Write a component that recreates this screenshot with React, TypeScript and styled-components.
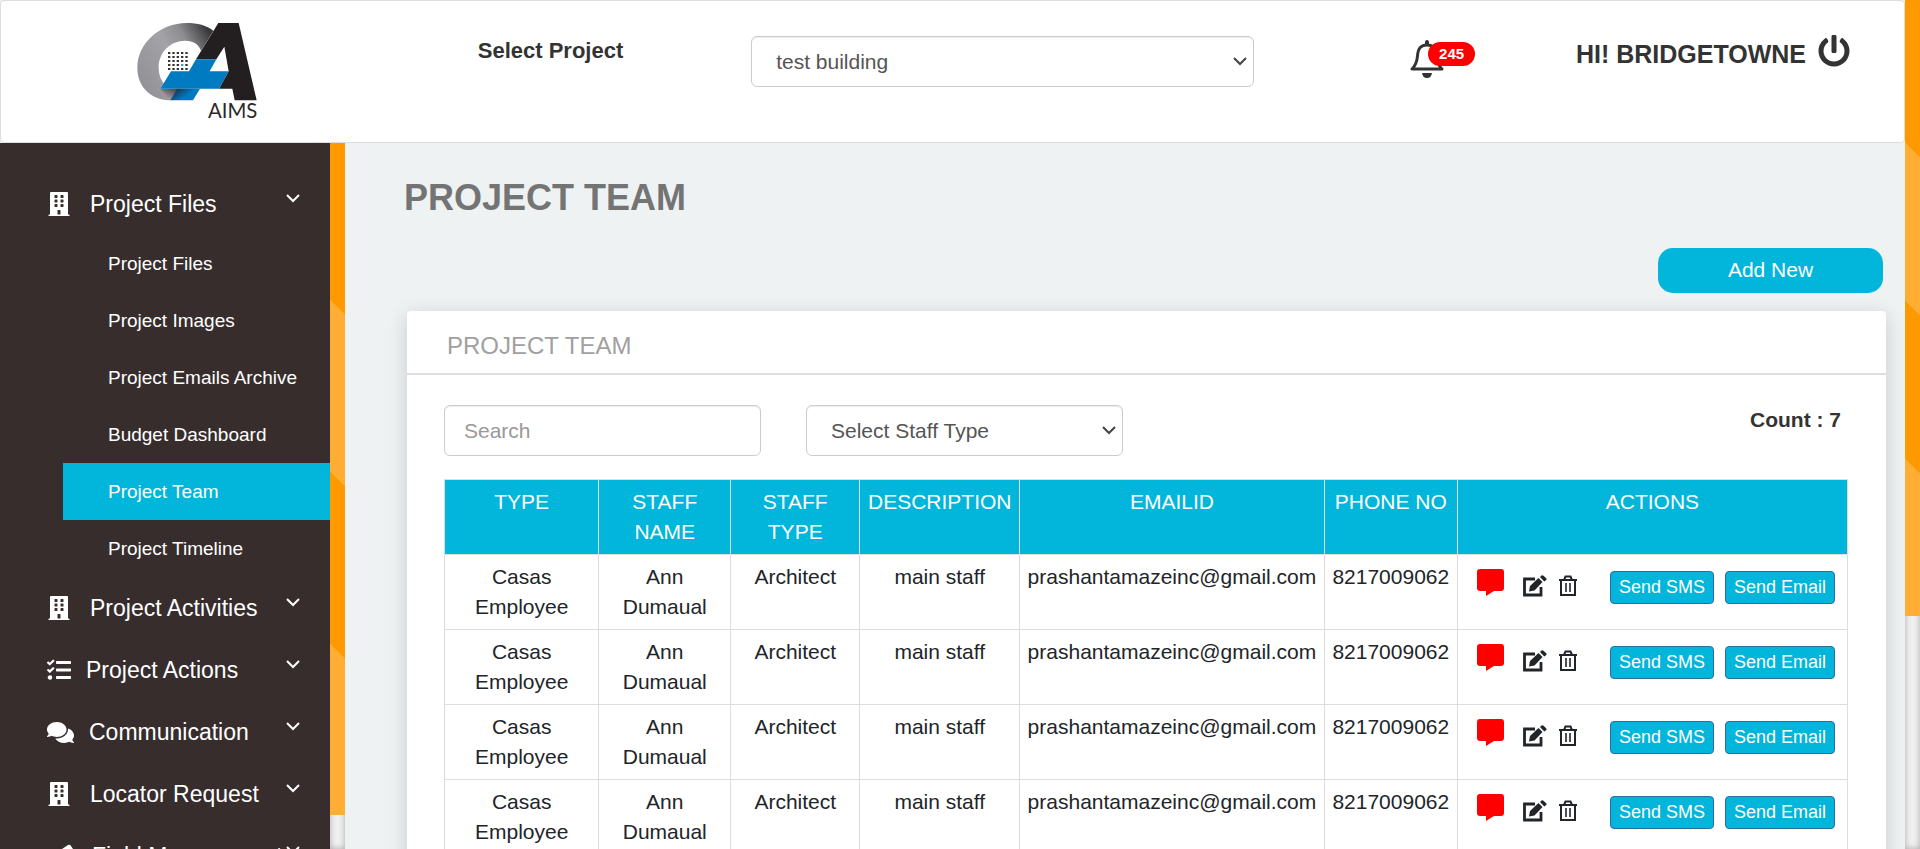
import React from 'react';
import styled, { createGlobalStyle } from 'styled-components';
import { FaBuilding, FaComments, FaPowerOff, FaTasks } from 'react-icons/fa';

const GlobalStyle = createGlobalStyle`
  *, *::before, *::after { box-sizing: border-box; }
  body { margin: 0; font-family: "Liberation Sans", Arial, sans-serif; color: #333; background: #eef2f3; }
  button, input, select { font-family: inherit; }
`;

const Shell = styled.div`
  display: grid;
  grid-template-columns: minmax(0, 1fr) 15px;
  height: 100vh;
  overflow: hidden;
`;

const Page = styled.div`
  display: flex;
  flex-direction: column;
  min-height: 0;
`;

const ScrollRail = styled.div`
  background: #f0f0f0;
  box-shadow: inset 0 0 6px rgba(0, 0, 0, 0.3);
`;

const ScrollThumb = styled.div<{ $share: string }>`
  height: ${(p) => p.$share};
  background: #ff9900 linear-gradient(45deg, #ffad33 25%, transparent 25%, transparent 50%, #ffad33 50%, #ffad33 75%, transparent 75%);
`;

const Header = styled.header`
  flex: none;
  display: grid;
  grid-template-columns: 25% 14% 30% 14% minmax(0, 1fr);
  height: 143px;
  background: #fff;
  border: 1px solid #ddd;
  border-radius: 4px;
`;

const LogoLink = styled.a`
  padding: 20px 0 0 133px;
  svg { display: block; }
`;

const ProjectLabel = styled.label`
  padding: 36px 0 0 1px;
  font-size: 22px;
  line-height: 28px;
  font-weight: bold;
`;

const ProjectField = styled.div`
  padding: 35px 60px 0 8px;
`;

const SelectWrap = styled.div`
  position: relative;
  svg { position: absolute; right: 7px; top: 18px; pointer-events: none; }
`;

const Select = styled.select`
  appearance: none;
  display: block;
  width: 100%;
  height: 51px;
  padding: 0 24px;
  font-size: 21px;
  color: #555;
  background: #fff;
  border: 1px solid #ccc;
  border-radius: 6px;
  box-shadow: inset 0 1px 1px rgba(0, 0, 0, 0.075);
`;

const BellButton = styled.button`
  position: relative;
  align-self: start;
  justify-self: start;
  margin: 38px 0 0 96px;
  padding: 0;
  border: 0;
  background: none;
  color: #333;
  svg { display: block; }
`;

const Badge = styled.span`
  position: absolute;
  left: 18px;
  top: 3px;
  padding: 0 11px;
  border-radius: 12px;
  background: red;
  color: #fff;
  font-size: 15px;
  line-height: 24px;
  font-weight: bold;
`;

const User = styled.div`
  display: flex;
  justify-content: flex-end;
  align-items: flex-start;
  gap: 12px;
  padding: 34px 54px 0 0;
  font-size: 25px;
  line-height: 38px;
  font-weight: bold;
  white-space: nowrap;
`;

const PowerButton = styled.button`
  padding: 0;
  border: 0;
  background: none;
  color: #333;
  svg { display: block; }
`;

const Body = styled.div`
  flex: 1;
  display: grid;
  grid-template-columns: 330px 15px minmax(0, 1fr);
  min-height: 0;
`;

const Sidebar = styled.nav`
  padding-top: 30px;
  background: #372d2d;
  overflow: hidden;
`;

const Group = styled.a`
  display: flex;
  align-items: center;
  height: 62px;
  padding-left: 47px;
  color: #fff;
  font-size: 23px;
  text-decoration: none;
  white-space: nowrap;
`;

const GroupLabel = styled.span<{ $gap: number }>`
  flex: 1;
  padding-left: ${(p) => p.$gap}px;
`;

const ChevronIcon = styled.svg`
  flex: none;
  margin: 0 30px 12px 0;
`;

const SubList = styled.ul`
  margin: 0 0 0 63px;
  padding: 0;
  list-style: none;
`;

const SubLink = styled.a<{ $active?: boolean }>`
  display: block;
  padding-left: 45px;
  font-size: 19px;
  line-height: 57px;
  color: #fff;
  background: ${(p) => (p.$active ? '#02b5da' : 'transparent')};
  text-decoration: none;
`;

const Main = styled.main`
  min-width: 0;
  padding: 33px 19px 0 62px;
  background: #eef2f3;
  overflow: hidden;
`;

const Title = styled.h1`
  margin: 0 -3px;
  font-size: 36px;
  line-height: 44px;
  color: #747474;
`;

const AddButton = styled.button`
  display: block;
  width: 225px;
  height: 45px;
  margin: 28px 3px 18px auto;
  padding: 0 0 2px;
  border: 0;
  border-radius: 15px;
  background: #02b5da;
  color: #fff;
  font-size: 21px;
`;

const Card = styled.section`
  background: #fff;
  border-radius: 4px;
  box-shadow: 0 4px 20px rgba(0, 0, 0, 0.16);
`;

const CardTitle = styled.h2`
  margin: 0;
  padding: 11px 40px 4px;
  font-size: 24px;
  line-height: 47px;
  font-weight: normal;
  color: #a0a0a0;
  border-bottom: 2px solid #ddd;
`;

const CardBody = styled.div`
  padding: 30px 38px 40px 37px;
`;

const Filters = styled.div`
  display: grid;
  grid-template-columns: 317px 317px 1fr;
  gap: 45px;
  margin-bottom: 23px;
`;

const Search = styled.input`
  width: 100%;
  height: 51px;
  padding: 0 19px;
  font-size: 21px;
  color: #555;
  border: 1px solid #ccc;
  border-radius: 6px;
  box-shadow: inset 0 1px 1px rgba(0, 0, 0, 0.075);
  &::placeholder { color: #999; opacity: 1; }
`;

const Count = styled.strong`
  padding-right: 7px;
  font-size: 21px;
  line-height: 30px;
  text-align: right;
`;

const Table = styled.table`
  width: 100%;
  table-layout: fixed;
  border-collapse: collapse;
  font-size: 21px;
  line-height: 30px;
  text-align: center;
  color: #212529;
`;

const Th = styled.th`
  height: 75px;
  padding: 7px 6px;
  border: 1px solid #ddd;
  background: #02b5da;
  color: #fff;
  font-weight: normal;
  vertical-align: top;
`;

const Td = styled.td`
  height: 75px;
  padding: 7px 6px;
  border: 1px solid #ddd;
  vertical-align: top;
`;

const Actions = styled.div`
  display: flex;
  align-items: flex-start;
  padding: 7px 5px 0 13px;
`;

const IconButton = styled.button<{ $space: number; $drop?: number }>`
  display: flex;
  flex: none;
  margin: ${(p) => p.$drop ?? 0}px ${(p) => p.$space}px 0 0;
  padding: 0;
  border: 0;
  background: none;
  color: #212529;
`;

const SendButton = styled.button`
  flex: none;
  height: 33px;
  margin-top: 2px;
  padding: 0 8px 2px;
  border: 1px solid #2e6da4;
  border-radius: 4px;
  background: #02b5da;
  color: #fff;
  font-size: 18px;
  line-height: 30px;
  & + & { margin-left: 11px; }
`;

const Logo = () => (
  <svg width="130" height="101" viewBox="102 63 390 303" role="img" aria-label="AIMS">
    <defs>
      <linearGradient id="ring" gradientUnits="userSpaceOnUse" x1="112" y1="240" x2="335" y2="110">
        <stop offset="0" stopColor="#919196" />
        <stop offset="0.5" stopColor="#a2a2a7" />
        <stop offset="0.72" stopColor="#8e8e92" />
        <stop offset="1" stopColor="#3a383a" />
      </linearGradient>
      <linearGradient id="fold" gradientUnits="userSpaceOnUse" x1="236" y1="262" x2="256" y2="290">
        <stop offset="0" stopColor="#17344a" />
        <stop offset="1" stopColor="#007ac0" />
      </linearGradient>
      <linearGradient id="shade" gradientUnits="userSpaceOnUse" x1="215" y1="262" x2="200" y2="292">
        <stop offset="0" stopColor="#333" stopOpacity="0.8" />
        <stop offset="1" stopColor="#333" stopOpacity="0" />
      </linearGradient>
    </defs>
    <path fill="url(#ring)" d="M340 92C320 76 292 69 260 69C180 69 112 130 112 203C112 265 158 301 213 301L234 266H181L191 250C181 237 176 221 176 203C176 156 212 122 255 122C280 122 298 133 303 153Z" />
    <path fill="url(#shade)" d="M181 266H234L213 301Z" />
    <path fill="#231f20" d="M355 69H416L470 301H404L397 266H357L386 214L373 140L349 178H288Z" />
    <path fill="#007ac0" d="M288 178H349L329 214H386L357 266H181L213 214H267Z" />
    <path fill="url(#fold)" d="M232 266H300L279 301H211Z" />
    {[0, 1, 2, 3, 4].map((r) =>
      [0, 1, 2, 3, 4].map((c) => (
        <rect key={`${r}-${c}`} x={204 + c * 13} y={156 + r * 12} width="7" height="6" fill={r === 3 && c === 3 ? '#29a0dc' : '#333'} />
      )),
    )}
    <text x="324" y="353" fontFamily="Lato, sans-serif" fontSize="61" fill="#2d292a">AIMS</text>
  </svg>
);

const Caret = () => (
  <svg width="14" height="14" viewBox="0 0 14 14" fill="none" stroke="#444" strokeWidth="2">
    <path d="M1 4l6 6 6-6" />
  </svg>
);

const Chevron = () => (
  <ChevronIcon width="14" height="10" viewBox="0 0 14 10" fill="none" stroke="#fff" strokeWidth="2">
    <path d="M1 2l6 6 6-6" />
  </ChevronIcon>
);

const Bell = () => (
  <svg width="34" height="40" viewBox="0 0 34 40" fill="none" stroke="#333" strokeWidth="3">
    <path d="M17 3V5" strokeWidth="4" strokeLinecap="round" />
    <path d="M2 30H32C28 26 27 23 26.500 17C26 9 23 6 17 6S8 9 7.500 17C7 23 6 26 2 30Z" strokeLinejoin="round" />
    <path d="M12 34H22C21.500 37 20 39 17 39S12.500 37 12 34Z" fill="#333" stroke="none" />
  </svg>
);

const Comment = () => (
  <svg width="27" height="27" viewBox="0 0 27 27" fill="red">
    <path d="M3 0H24Q27 0 27 3V19Q27 22 24 22H17L9 27V22H3Q0 22 0 19V3Q0 0 3 0Z" />
  </svg>
);

const Edit = () => (
  <svg width="24" height="22" viewBox="0 0 24 22" fill="none" stroke="#212529">
    <path d="M12 4H1.500V20H18V12" strokeWidth="2.800" />
    <path d="M6 16.500L7 11L15.500 3L19.500 7L11.500 15.500Z" fill="#212529" stroke="none" />
    <path d="M17 2L18.500 0.500Q19.500 -0.300 20.500 0.700L23.200 3.300Q24 4.300 23 5.200L21.300 6.500Z" fill="#212529" stroke="none" />
  </svg>
);

const Trash = () => (
  <svg width="18" height="22" viewBox="0 0 18 22" fill="none" stroke="#212529" strokeWidth="2">
    <path d="M0 5H18M5 5L6.500 1.500H11.500L13 5M2 5V20H16V5" />
    <path d="M7 8V17M11 8V17" strokeWidth="1.600" />
  </svg>
);

const Tool = () => (
  <svg width="30" height="24" viewBox="0 0 30 24" fill="#fff">
    <path d="M15 5L21 1Q23 0 24 2L28 8L12 24H2Z" />
  </svg>
);

const subLinks = ['Project Files', 'Project Images', 'Project Emails Archive', 'Budget Dashboard', 'Project Team', 'Project Timeline'];

const groups = [
  { label: 'Project Activities', icon: <FaBuilding size={24} />, gap: 19 },
  { label: 'Project Actions', icon: <FaTasks size={24} />, gap: 15 },
  { label: 'Communication', icon: <FaComments size={27} />, gap: 15 },
  { label: 'Locator Request', icon: <FaBuilding size={24} />, gap: 19 },
  { label: 'Field Management', icon: <Tool />, gap: 15 },
];

const columns = [
  { label: 'TYPE', width: '11%' },
  { label: 'STAFF NAME', width: '9.4%' },
  { label: 'STAFF TYPE', width: '9.2%' },
  { label: 'DESCRIPTION', width: '11.4%' },
  { label: 'EMAILID', width: '21.7%' },
  { label: 'PHONE NO', width: '9.5%' },
  { label: 'ACTIONS', width: '27.8%' },
];

const member = ['Casas Employee', 'Ann Dumaual', 'Architect', 'main staff', 'prashantamazeinc@gmail.com', '8217009062'];
const team = [member, member, member, member];

export default function App() {
  return (
    <Shell>
      <GlobalStyle />
      <Page>
        <Header>
          <LogoLink href="#"><Logo /></LogoLink>
          <ProjectLabel htmlFor="project">Select Project</ProjectLabel>
          <ProjectField>
            <SelectWrap>
              <Select id="project"><option>test building</option></Select>
              <Caret />
            </SelectWrap>
          </ProjectField>
          <BellButton aria-label="Notifications"><Bell /><Badge>245</Badge></BellButton>
          <User>HI! BRIDGETOWNE<PowerButton aria-label="Log out"><FaPowerOff size={32} /></PowerButton></User>
        </Header>
        <Body>
          <Sidebar>
            <Group href="#"><FaBuilding size={24} /><GroupLabel $gap={19}>Project Files</GroupLabel><Chevron /></Group>
            <SubList>
              {subLinks.map((l) => (
                <li key={l}><SubLink href="#" $active={l === 'Project Team'}>{l}</SubLink></li>
              ))}
            </SubList>
            {groups.map((g) => (
              <Group href="#" key={g.label}>{g.icon}<GroupLabel $gap={g.gap}>{g.label}</GroupLabel><Chevron /></Group>
            ))}
          </Sidebar>
          <ScrollRail><ScrollThumb $share="95.2%" /></ScrollRail>
          <Main>
            <Title>PROJECT TEAM</Title>
            <AddButton>Add New</AddButton>
            <Card>
              <CardTitle>PROJECT TEAM</CardTitle>
              <CardBody>
                <Filters>
                  <Search aria-label="Search" placeholder="Search" />
                  <SelectWrap>
                    <Select aria-label="Staff type"><option>Select Staff Type</option></Select>
                    <Caret />
                  </SelectWrap>
                  <Count>Count : 7</Count>
                </Filters>
                <Table>
                  <colgroup>{columns.map((c) => <col key={c.label} width={c.width} />)}</colgroup>
                  <thead><tr>{columns.map((c) => <Th key={c.label} scope="col">{c.label}</Th>)}</tr></thead>
                  <tbody>
                    {team.map((row, i) => (
                      <tr key={i}>
                        {row.map((v) => <Td key={v}>{v}</Td>)}
                        <Td>
                          <Actions>
                            <IconButton aria-label="Comment" $space={19}><Comment /></IconButton>
                            <IconButton aria-label="Edit" $space={12} $drop={6}><Edit /></IconButton>
                            <IconButton aria-label="Delete" $space={33} $drop={6}><Trash /></IconButton>
                            <SendButton>Send SMS</SendButton>
                            <SendButton>Send Email</SendButton>
                          </Actions>
                        </Td>
                      </tr>
                    ))}
                  </tbody>
                </Table>
              </CardBody>
            </Card>
          </Main>
        </Body>
      </Page>
      <ScrollRail><ScrollThumb $share="72.6%" /></ScrollRail>
    </Shell>
  );
}
